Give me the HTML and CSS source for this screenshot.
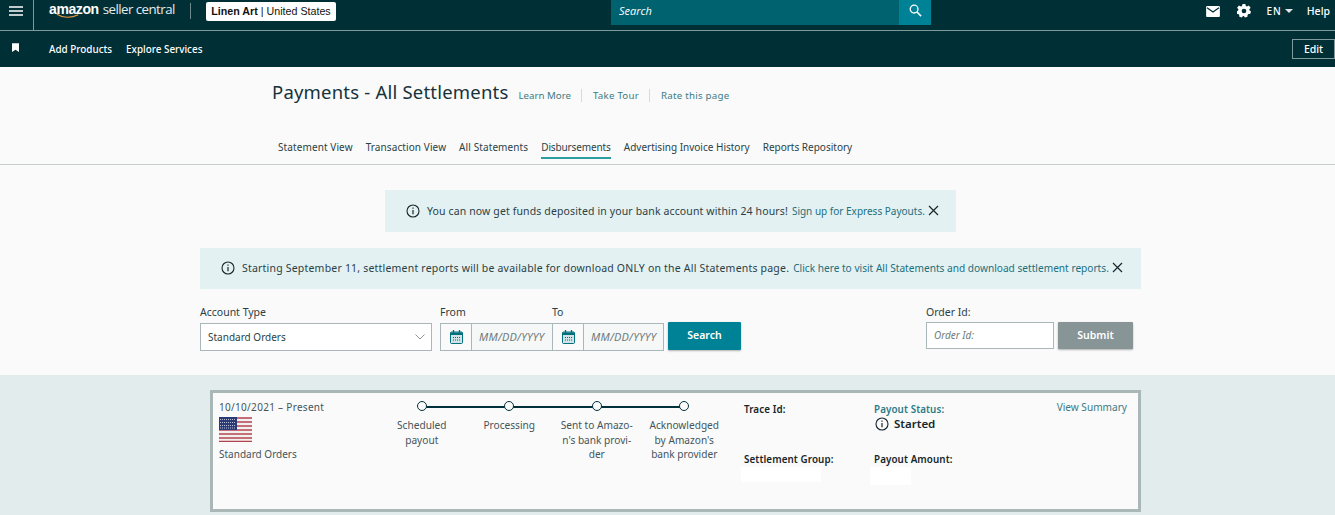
FILE: index.html
```html
<!DOCTYPE html>
<html lang="en">
<head>
<meta charset="utf-8">
<title>Payments - All Settlements</title>
<link rel="stylesheet" href="styles.css">
</head>
<body>
<header class="topbar">
  <div class="burger-cell">
    <svg class="burger" width="14" height="10" viewBox="0 0 14 10"><path d="M0 1h14M0 5h14M0 9h14" stroke="#fff" stroke-width="1.4"/></svg>
  </div>
  <div class="logo">
    <span class="logo-amazon">amazon</span><span class="logo-rest">seller central</span>
    <svg class="smile" width="28" height="6" viewBox="0 0 28 6"><path d="M1 1c7 4.500 17 4.500 25 .5" fill="none" stroke="#e9973a" stroke-width="1.400"/></svg>
  </div>
  <div class="logo-sep"></div>
  <div class="account"><b>Linen Art</b> | United States</div>
  <div class="searchbox">
    <span class="search-text">Search</span>
    <span class="search-btn"><svg width="13" height="13" viewBox="0 0 14 14"><circle cx="5.500" cy="5.500" r="4.200" fill="none" stroke="#fff" stroke-width="1.400"/><path d="M8.600 8.600 13 13" stroke="#fff" stroke-width="1.700"/></svg></span>
  </div>
  <div class="top-right">
    <svg class="mail" width="14" height="11" viewBox="0 0 15 12"><rect width="15" height="12" rx="1" fill="#fff"/><path d="M1 2l6.500 4.500L14 2" fill="none" stroke="#002f36" stroke-width="1.400"/></svg>
    <svg class="gear" width="14" height="14" viewBox="0 0 15 15"><path fill="#fff" fill-rule="evenodd" d="M6 0h3l.4 2.100 1.200.6L12.600 1.600l2 2.400-1.400 1.700.3 1.300 1.500 1-.9 2.800-1.900-.1-.9 1-.1 2-2.700.7-1.200-1.600H6.400l-1.200 1.600-2.700-.7-.1-2-.9-1-1.900.1L-.3 8l1.500-1 .3-1.300L.1 4l2-2.400 2 1.100 1.200-.6zM7.500 5a2.500 2.500 0 1 0 0 5 2.500 2.500 0 0 0 0-5z"/></svg>
    <span class="lang">EN</span><span class="caret"></span>
    <span class="help">Help</span>
  </div>
</header>
<nav class="subbar">
  <svg class="bookmark" width="7" height="9" viewBox="0 0 8 10"><path d="M0 0h8v10L4 7.500 0 10z" fill="#fff"/></svg>
  <a class="sub-link sub-first">Add Products</a>
  <a class="sub-link">Explore Services</a>
  <span class="edit">Edit</span>
</nav>
<main class="page">
  <div class="title-row">
    <h1>Payments - All Settlements</h1>
    <a class="tl">Learn More</a><a class="tl tl-sep">Take Tour</a><a class="tl tl-sep">Rate this page</a>
  </div>
  <div class="tabs">
    <a class="tab">Statement View</a>
    <a class="tab">Transaction View</a>
    <a class="tab">All Statements</a>
    <a class="tab active">Disbursements</a>
    <a class="tab">Advertising Invoice History</a>
    <a class="tab">Reports Repository</a>
  </div>
  <div class="alert alert-a">
    <svg class="info" width="14" height="14" viewBox="0 0 14 14"><circle cx="7" cy="7" r="6" fill="none" stroke="#16262a" stroke-width="1.100"/><path d="M7 6v4.200M7 3.500v1.300" stroke="#16262a" stroke-width="1.200"/></svg>
    <span class="alert-text">You can now get funds deposited in your bank account within 24 hours!</span>
    <a class="alert-link">Sign up for Express Payouts.</a>
    <svg class="close" width="11" height="11" viewBox="0 0 11 11"><path d="M1 1l9 9M10 1l-9 9" stroke="#16262a" stroke-width="1.200"/></svg>
  </div>
  <div class="alert alert-b">
    <svg class="info" width="14" height="14" viewBox="0 0 14 14"><circle cx="7" cy="7" r="6" fill="none" stroke="#16262a" stroke-width="1.100"/><path d="M7 6v4.200M7 3.500v1.300" stroke="#16262a" stroke-width="1.200"/></svg>
    <span class="alert-text">Starting September 11, settlement reports will be available for download ONLY on the All Statements page.</span>
    <a class="alert-link">Click here to visit All Statements and download settlement reports.</a>
    <svg class="close" width="11" height="11" viewBox="0 0 11 11"><path d="M1 1l9 9M10 1l-9 9" stroke="#16262a" stroke-width="1.200"/></svg>
  </div>
  <form class="filters">
    <div class="field f-account">
      <label>Account Type</label>
      <div class="select">Standard Orders
        <svg width="10" height="6" viewBox="0 0 10 6"><path d="M.5.5 5 5 9.500.5" fill="none" stroke="#8a9696" stroke-width="1"/></svg>
      </div>
    </div>
    <div class="dates">
      <div class="field f-date">
        <label>From</label>
        <div class="date"><span class="cal"><svg width="13" height="14" viewBox="0 0 13 14"><rect x=".5" y="2" width="12" height="11.500" rx="1" fill="#cfe3e6" stroke="#00707f"/><path d="M.5 2.500h12V5H.5z" fill="#00707f"/><path d="M3.500 0v3M9.500 0v3" stroke="#00707f" stroke-width="1.300"/><path d="M3 7.500h7M3 10h7" stroke="#00707f" stroke-dasharray="1 1"/></svg></span><span class="ph">MM/DD/YYYY</span></div>
      </div>
      <div class="field f-date">
        <label>To</label>
        <div class="date date-to"><span class="cal"><svg width="13" height="14" viewBox="0 0 13 14"><rect x=".5" y="2" width="12" height="11.500" rx="1" fill="#cfe3e6" stroke="#00707f"/><path d="M.5 2.500h12V5H.5z" fill="#00707f"/><path d="M3.500 0v3M9.500 0v3" stroke="#00707f" stroke-width="1.300"/><path d="M3 7.500h7M3 10h7" stroke="#00707f" stroke-dasharray="1 1"/></svg></span><span class="ph">MM/DD/YYYY</span></div>
      </div>
    </div>
    <span class="btn btn-search">Search</span>
    <div class="field f-order">
      <label>Order Id:</label>
      <div class="order-row">
        <div class="order-input">Order Id:</div>
        <span class="btn btn-submit">Submit</span>
      </div>
    </div>
  </form>
  <section class="lower">
    <article class="card">
      <div class="c-left">
        <div class="c-date">10/10/2021 – Present</div>
        <svg class="flag" width="33" height="25" viewBox="0 0 33 25">
          <rect width="33" height="25" fill="#f4f0f0"/>
          <path d="M0 1h33M0 5h33M0 9h33M0 13h33M0 17h33M0 21h33M0 24.500h33" stroke="#b2444f" stroke-width="1.700"/>
          <rect width="18" height="13" fill="#2b3a73"/>
          <path d="M1 2.500h16M1 5.500h16M1 8.500h16M1 11h16" stroke="#b9c0dc" stroke-width="1" stroke-dasharray="1 1"/>
        </svg>
        <div>Standard Orders</div>
      </div>
      <ol class="stepper">
        <li class="step"><i></i>Scheduled<br>payout</li>
        <li class="step"><i></i>Processing</li>
        <li class="step"><i></i>Sent to Amazo-<br>n's bank provi-<br>der</li>
        <li class="step"><i></i>Acknowledged<br>by Amazon's<br>bank provider</li>
      </ol>
      <div class="c-col c-trace">
        <div class="c-label">Trace Id:</div>
        <div class="c-label c-low">Settlement Group:</div>
        <div class="blank blank-a"></div>
      </div>
      <div class="c-col c-payout">
        <div class="c-label c-teal">Payout Status:</div>
        <div class="started"><svg width="14" height="14" viewBox="0 0 14 14"><circle cx="7" cy="7" r="6" fill="none" stroke="#16262a" stroke-width="1.100"/><path d="M7 6v4.200M7 3.500v1.300" stroke="#16262a" stroke-width="1.200"/></svg>Started</div>
        <div class="c-label c-low2">Payout Amount:</div>
        <div class="blank blank-b"></div>
      </div>
      <a class="summary">View Summary</a>
    </article>
  </section>
</main>
</body>
</html>
```
FILE: styles.css
```css
* { box-sizing: border-box; }
html, body { margin: 0; height: 515px; overflow: hidden; }
body { font-family: "Noto Sans", "Open Sans", sans-serif; font-size: 10px; color: #2b3f44; background: #fafafa; }
svg { display: block; flex: none; }
a { color: inherit; text-decoration: none; }

.topbar { height: 31px; background: #002f36; border-bottom: 1px solid #7f9a9a; display: flex; align-items: flex-start; color: #fff; }
.burger-cell { width: 34px; height: 30px; border-right: 1px solid #7f9a9a; padding: 6px 0 0 9px; }
.logo { position: relative; margin: 0 0 0 15px; width: 127px; height: 24px; white-space: nowrap; display: flex; align-items: baseline; }
.logo-amazon { font-family: "Liberation Sans", sans-serif; font-weight: 700; font-size: 14px; line-height: 19px; letter-spacing: -.4px; }
.logo-rest { font-family: "Open Sans", sans-serif; font-size: 13.300px; line-height: 19px; letter-spacing: -.55px; margin-left: 4px; color: #e4ecec; }
.smile { position: absolute; left: 7px; top: 13px; width: 24px; }
.logo-sep { width: 1px; height: 16px; background: #6f8a8c; margin: 3px 0 0 14px; }
.account { width: 130px; height: 19px; margin: 2px 0 0 15px; background: #fff; color: #111; border-radius: 2px; font-family: "Liberation Sans", sans-serif; font-size: 10.700px; line-height: 19px; text-align: center; white-space: nowrap; }
.account b { font-weight: 700; }
.searchbox { width: 320px; height: 25px; margin-left: 275px; background: #00626f; display: flex; justify-content: space-between; align-items: center; }
.search-text { font-family: "Open Sans", sans-serif; font-style: italic; font-size: 11px; padding: 0 0 5px 8px; }
.search-btn { width: 32px; height: 25px; padding-bottom: 5px; background: #008296; display: flex; align-items: center; justify-content: center; }
.top-right { margin-left: auto; display: flex; align-items: center; height: 22px; padding-right: 5px; font-size: 10px; }
.mail { margin-right: 17px; }
.gear { margin-right: 15px; }
.lang { font-weight: 500; letter-spacing: 1px; }
.caret { width: 0; height: 0; border: 4px solid transparent; border-top-color: #dfe8e8; border-bottom: 0; margin: 0 14px 0 3px; }
.help { font-weight: 500; font-size: 10.500px; }

.subbar { height: 36px; background: #002f36; display: flex; align-items: center; color: #fff; padding: 0 0 0 12px; }
.bookmark { margin-top: -3px; }
.sub-link { font-size: 9.900px; font-weight: 500; margin-left: 14px; margin-top: -1px; }
.sub-first { margin-left: 30px; }
.edit { margin-left: auto; width: 43px; height: 20px; border: 1px solid #7f9a9a; font-size: 10.500px; font-weight: 500; line-height: 18px; text-align: center; margin-top: -1px; }

.page { background: #fafafa; }
.title-row { display: flex; align-items: baseline; height: 52px; padding: 11px 0 0 272px; }
h1 { margin: 0; font-size: 18.500px; font-weight: 400; color: #16323a; line-height: 28px; margin-right: 10px; letter-spacing: .2px; }
.tl { font-size: 9.700px; color: #3c7a85; }
.tl-sep { margin-left: 10px; padding-left: 11px; border-left: 1px solid #d5dbdb; letter-spacing: .25px; }
.tabs { display: flex; height: 46px; padding: 19px 0 0 278px; gap: 13px; border-bottom: 1px solid #c9cfcf; }
.tab { height: 21px; line-height: 15px; padding-top: 2px; font-size: 10px; color: #2b4247; white-space: nowrap; }
.tab:nth-child(-n+3) { letter-spacing: .1px; }
.tab.active { border-bottom: 2px solid #2b9ea4; letter-spacing: -.12px; }

.alert { display: flex; align-items: center; background: #e3f1f3; white-space: nowrap; }
.alert .info { margin-right: 7px; }
.alert-text { color: #2b3f44; font-size: 10.500px; margin-right: 4px; }
.alert-link { color: #1d6f7c; }
.alert .close { margin-left: 3px; }
.alert-a { width: 571px; height: 42px; margin: 25px 0 0 385px; padding: 0 0 1px 21px; }
.alert-a .alert-text { letter-spacing: .13px; }
.alert-a .alert-link { font-size: 10px; }
.alert-b { width: 941px; height: 41px; margin: 16px 0 0 200px; padding: 0 0 2px 21px; }
.alert-b .alert-text { letter-spacing: .2px; }
.alert-b .alert-link { font-size: 10.150px; }

.filters { display: flex; align-items: flex-start; height: 86px; padding: 16px 0 0 200px; }
.field label { display: block; font-size: 10.500px; line-height: 15px; height: 18px; color: #2b3f44; }
.f-account { width: 232px; }
.select { height: 28px; border: 1px solid #aab7b8; background: #fff; display: flex; align-items: center; justify-content: space-between; padding: 0 6px 0 7px; font-size: 10px; }
.dates { display: flex; margin-left: 8px; }
.f-date { width: 112px; }
.date { display: flex; height: 28px; border: 1px solid #aab7b8; border-right: 0; background: #f6f8f8; }
.date-to { border-right: 1px solid #aab7b8; }
.cal { width: 31px; display: flex; align-items: center; justify-content: center; border-right: 1px solid #aab7b8; background: #fafafa; }
.ph { font-style: italic; font-size: 11px; letter-spacing: .2px; color: #6e7b7d; line-height: 26px; padding-left: 7px; white-space: nowrap; }
.btn { display: block; color: #fff; font-size: 10.500px; font-weight: 600; text-align: center; border-radius: 1px; box-shadow: 0 1px 2px rgba(0,0,0,.3); }
.btn-search { width: 73px; height: 28px; line-height: 27px; background: #008296; margin: 17px 0 0 4px; }
.f-order { margin-left: 185px; }
.f-order label { height: 17px; }
.order-row { display: flex; gap: 4px; }
.order-input { width: 128px; height: 27px; border: 1px solid #aab7b8; background: #fff; font-style: italic; font-size: 10px; color: #6e7b7d; line-height: 25px; padding-left: 7px; }
.btn-submit { width: 75px; height: 27px; line-height: 26px; background: #879596; }

.lower { background: #e3ecec; height: 140px; padding: 15px 0 0 210px; }
.card { position: relative; width: 931px; height: 122px; border: 3px solid #a9b7b7; background: #fafafa; display: flex; font-size: 10px; color: #44555a; }
.c-left { width: 165px; padding: 7px 0 0 6px; line-height: 14px; }
.c-date { letter-spacing: .3px; }
.flag { margin: 3px 0 5px; }
.stepper { list-style: none; margin: 0; padding: 0; display: flex; width: 350px; position: relative; }
.stepper::before { content: ""; position: absolute; left: 44px; width: 262px; top: 13px; height: 2px; background: #00303a; }
.step { position: relative; width: 87.500px; text-align: center; font-size: 10.150px; line-height: 14.500px; padding-top: 8px; white-space: nowrap; }
.step i { display: block; width: 10px; height: 10px; margin: 0 auto 7px; border: 1.300px solid #00303a; border-radius: 50%; background: #fafafa; }
.c-col { padding-top: 10px; }
.c-trace { width: 130px; margin-left: 16px; }
.c-payout { width: 170px; }
.c-label { font-weight: 600; font-size: 9.800px; line-height: 14px; color: #16262a; white-space: nowrap; letter-spacing: .1px; }
.c-low { margin-top: 36px; }
.c-low2 { margin-top: 21px; }
.c-teal { color: #2d7a88; }
.started { display: flex; align-items: center; gap: 5px; font-size: 11.500px; font-weight: 600; color: #16262a; line-height: 16px; margin-top: -1px; }
.started svg { margin-left: 1px; }
.blank { background: #fff; height: 15px; }
.blank-a { width: 80px; margin: 0 0 0 -3px; }
.blank-b { width: 41px; height: 18px; margin: 0 0 0 -4px; }
.summary { position: absolute; right: 11px; top: 6px; color: #3c7a85; font-size: 10.100px; line-height: 16px; }
```
